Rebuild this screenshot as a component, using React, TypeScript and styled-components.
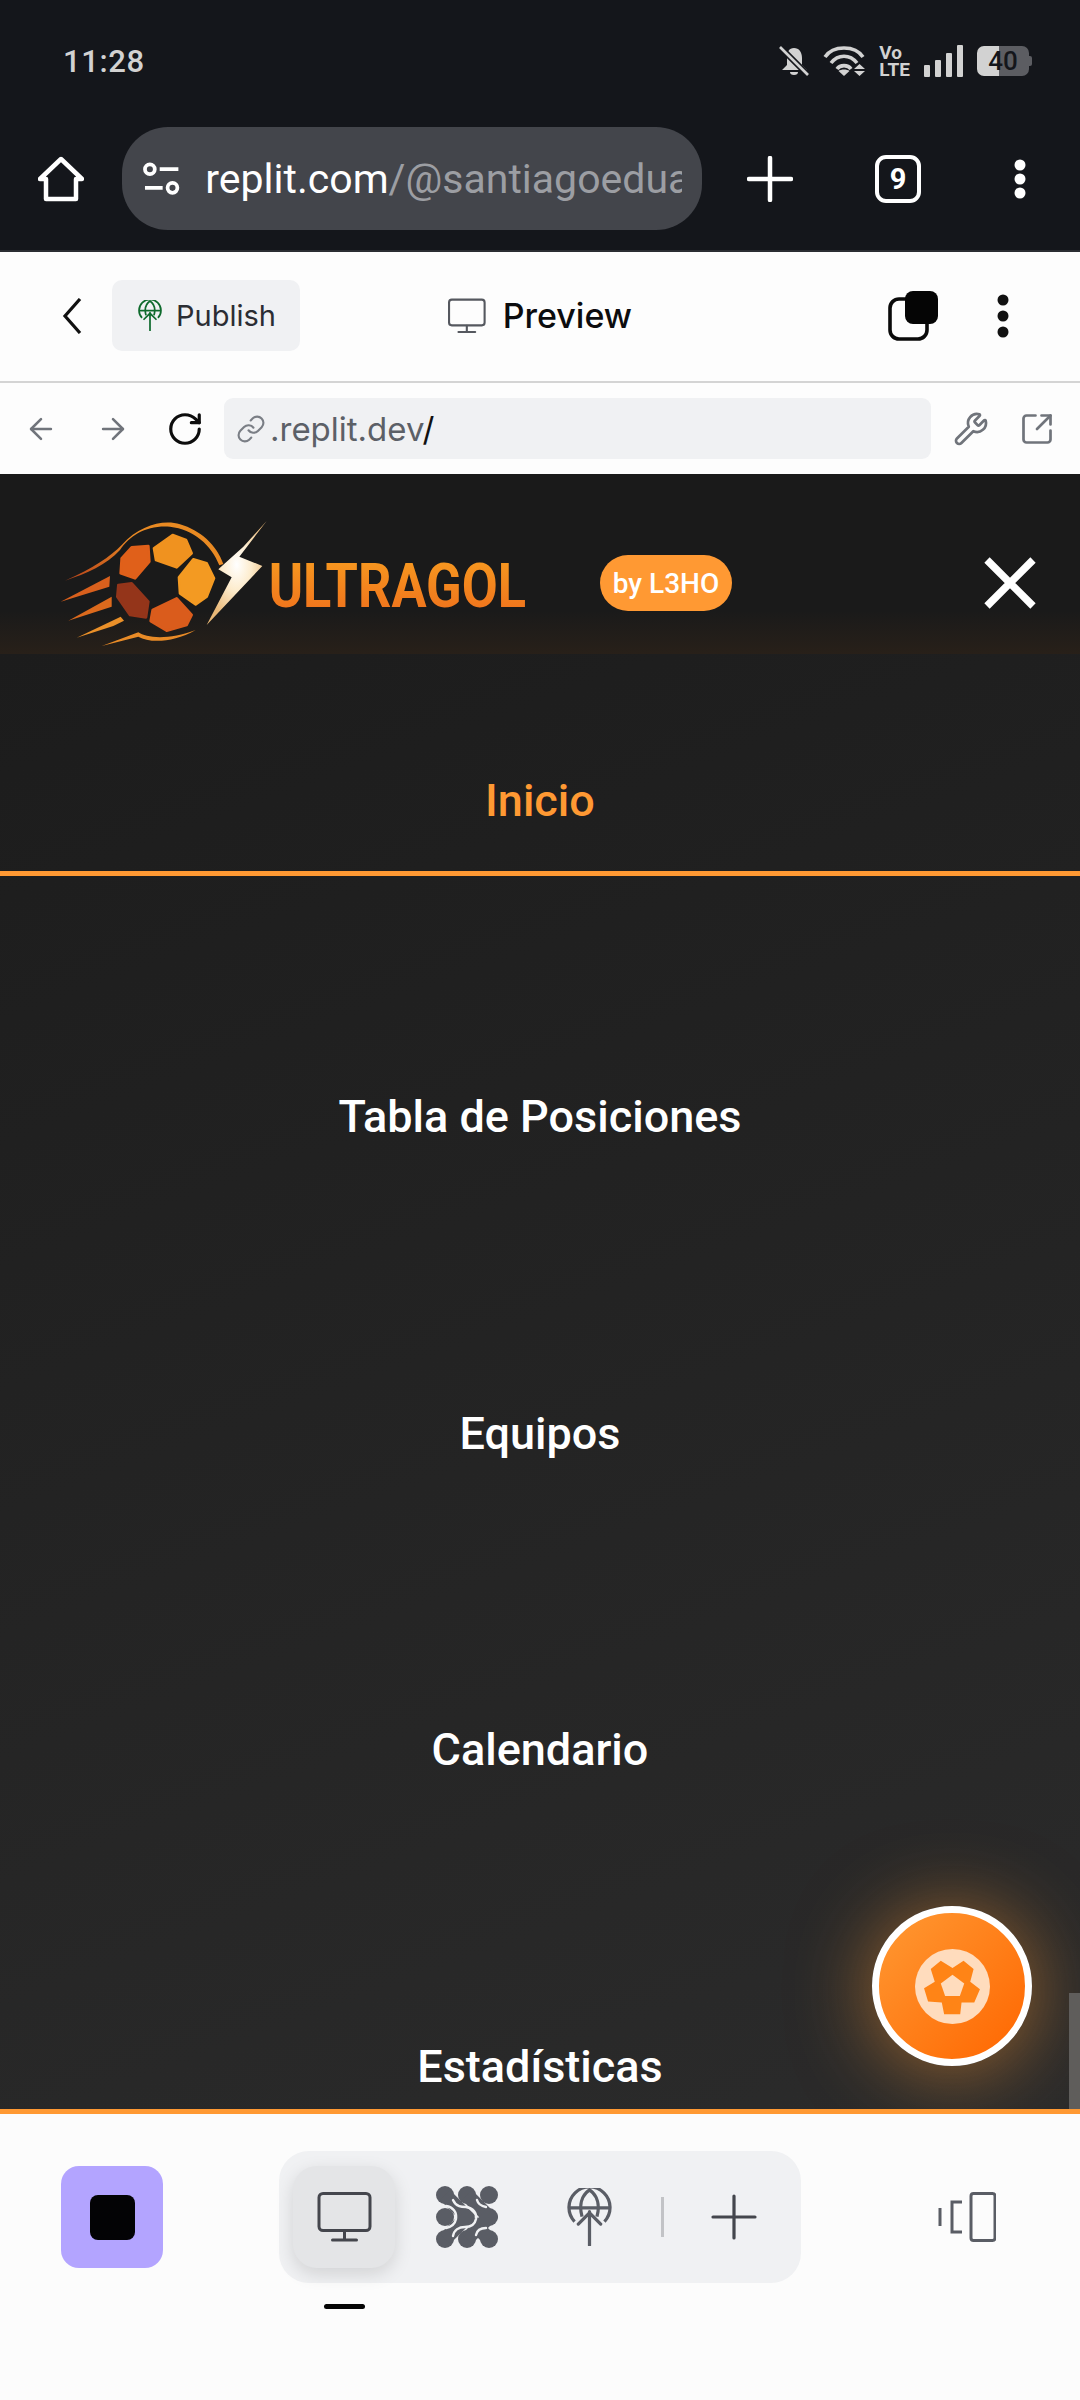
import React from "react";
import styled, { createGlobalStyle } from "styled-components";
import { ArrowLeft, ArrowRight, Link, RotateCw, SquareArrowOutUpRight, Wrench } from "lucide-react";

const GlobalStyle = createGlobalStyle`
  html, body { margin: 0; padding: 0; background: #fcfcfc; }
  * { box-sizing: border-box; }
  body { font-family: Roboto, "Liberation Sans", sans-serif; }
`;

const menuItems = ["Inicio", "Tabla de Posiciones", "Equipos", "Calendario", "Estadísticas"];

const ballPanels = [
  { fill: "#f0921f", d: "M372 175L428 135L468 150L485 190L440 232L378 210Z" },
  { fill: "#f39a22", d: "M490 208L530 220L552 265L530 320L497 343L450 310L447 262Z" },
  { fill: "#e0601a", d: "M305 172L355 168L358 215L315 265L272 250L275 205Z" },
  { fill: "#94351a", d: "M265 285L305 280L355 335L348 382L300 375L262 320Z" },
  { fill: "#da5c1c", d: "M440 325L485 375L470 405L410 422L362 393L368 360Z" }
];

const GlobeUp: React.FC<{ color: string; size: number }> = ({ color, size }) => (
  <svg width={size} height={size * 1.3} viewBox="0 0 36 47" fill="none" stroke={color} strokeWidth="2.6">
    <path d="M6 27A16.5 16.5 0 1 1 30 27" />
    <path d="M1.5 16H34.5" />
    <path d="M12 23C9.5 14 11.5 6 18 1.5C24.5 6 26.5 14 24 23" />
    <path d="M18 19V46M9 29L18 20L27 29" strokeLinecap="round" />
  </svg>
);

const MonitorIcon: React.FC<{ color: string; width: number; height: number; stroke: number }> = ({
  color,
  width,
  height,
  stroke
}) => (
  <svg width={width} height={height} viewBox="0 0 54 50" fill="none" stroke={color} strokeWidth={stroke}>
    <rect x="1.5" y="1.5" width="51" height="37" rx="4" />
    <path d="M27 39V47M15 48H39" strokeLinecap="round" />
  </svg>
);

const PlusIcon: React.FC<{ color: string; size: number; stroke: number }> = ({ color, size, stroke }) => (
  <svg width={size} height={size} viewBox="0 0 46 46" stroke={color} strokeWidth={stroke} strokeLinecap="round">
    <path d="M23 2V44M2 23H44" />
  </svg>
);

const DotsIcon: React.FC<{ color: string; height: number }> = ({ color, height }) => (
  <svg width="12" height={height} viewBox={`0 0 12 ${height}`} fill={color}>
    <circle cx="6" cy="6" r="5.5" />
    <circle cx="6" cy={height / 2} r="5.5" />
    <circle cx="6" cy={height - 6} r="5.5" />
  </svg>
);

const Logo = () => (
  <svg width="520" height="164" viewBox="0 0 1560 492">
    <defs>
      <linearGradient id="swoosh" x1="0" y1="1" x2="1" y2="0">
        <stop offset="0" stopColor="#b8431a" />
        <stop offset="0.6" stopColor="#ea8a24" />
        <stop offset="1" stopColor="#e88a20" />
      </linearGradient>
      <linearGradient id="word" x1="0" y1="0" x2="0" y2="1">
        <stop offset="0" stopColor="#f89f20" />
        <stop offset="1" stopColor="#ee6c1c" />
      </linearGradient>
      <radialGradient id="bolt" cx="0.5" cy="0.42" r="0.55">
        <stop offset="0" stopColor="#ffffff" />
        <stop offset="0.45" stopColor="#fdeccd" />
        <stop offset="1" stopColor="#e9b877" />
      </radialGradient>
    </defs>
    <path fill="url(#swoosh)" d="M105 272C190 235 240 200 275 165C330 105 400 88 450 103C510 120 560 165 580 222L568 226C545 165 490 118 420 110C350 105 300 135 270 180C230 225 170 250 105 272Z" />
    <path fill="#d9601d" d="M92 335L240 258L238 290Z" />
    <path fill="#dc6a1d" d="M115 392L245 320L245 350Z" />
    <path fill="#ea9029" d="M140 443L272 380L282 392L250 408Z" />
    <path fill="#e98b27" d="M215 468L325 427C350 445 420 450 497 420C430 458 360 460 325 440Z" />
    {ballPanels.map(panel => (
      <path key={panel.d} d={panel.d} fill={panel.fill} stroke={panel.fill} strokeWidth="8" strokeLinejoin="round" />
    ))}
    <path fill="url(#bolt)" d="M710 93L628 200L697 228L530 405L605 262L565 238L640 170Z" />
    <text
      x="716"
      y="352"
      fill="url(#word)"
      fontFamily="Roboto, sans-serif"
      fontWeight="700"
      fontSize="186"
      textLength="772"
      lengthAdjust="spacingAndGlyphs"
    >
      ULTRAGOL
    </text>
  </svg>
);

const AgentIcon = () => (
  <svg width="62" height="62" viewBox="0 0 62 62" fill="#5a5d65">
    <circle cx="9" cy="9" r="9" />
    <circle cx="31" cy="9" r="9" />
    <circle cx="53" cy="9" r="9" />
    <circle cx="9" cy="31" r="9" />
    <circle cx="53" cy="31" r="9" />
    <circle cx="9" cy="53" r="9" />
    <circle cx="31" cy="53" r="9" />
    <circle cx="53" cy="53" r="9" />
    <path d="M9 9L31 31L9 53M31 9L53 31L31 53M53 53L31 31" stroke="#5a5d65" strokeWidth="14" fill="none" />
    <path
      d="M17 14C20 21 26 21 30 21C37 22 41 27 40 33C39 38 35 41 29 41C23 41 18 44 17 50"
      stroke="#f0f1f3"
      strokeWidth="2.4"
      fill="none"
      strokeLinecap="round"
    />
    <path d="M10 20C17 21 21 26 20 33C19 38 15 41 10 42" stroke="#f0f1f3" strokeWidth="2.4" fill="none" strokeLinecap="round" />
    <path d="M41 14C42 18 45 20 50 21M40 49C41 44 45 42 50 42" stroke="#f0f1f3" strokeWidth="2.4" fill="none" strokeLinecap="round" />
  </svg>
);

const App = () => (
  <Page>
    <GlobalStyle />
    <BrowserChrome>
      <StatusBar>
        <Clock>11:28</Clock>
        <StatusIcons>
          <svg width="30" height="30" viewBox="0 0 30 30" fill="#d2d2d2">
            <path d="M15 2C20 2 23 6 23 12V19L28 24H3L8 19V11C8 6 10 2 15 2Z" />
            <path d="M11 26H19A4 3 0 0 1 11 26Z" />
            <path d="M1 1L29 29" stroke="#14161b" strokeWidth="6" />
            <path d="M1 1L29 29" stroke="#d2d2d2" strokeWidth="2.6" />
          </svg>
          <svg width="42" height="30" viewBox="0 0 42 30" fill="none" stroke="#d2d2d2" strokeWidth="3.6">
            <path d="M2 11C10 -1 32 -1 40 11" />
            <path d="M8 17C15 8 27 8 34 17" />
            <path d="M14 23C17 18.5 25 18.5 28 23" />
            <path d="M21 30L15.5 25C18 23 24 23 26.5 25Z" fill="#d2d2d2" stroke="none" />
            <path d="M31 23H42L36.5 18ZM31 25H42L36.5 30Z" fill="#d2d2d2" stroke="none" />
          </svg>
          <VoLte>
            <span>Vo</span>
            <span>LTE</span>
          </VoLte>
          <SignalBars>
            {[14, 20, 29, 38].map(h => (
              <SignalBar key={h} $height={h} />
            ))}
          </SignalBars>
          <Battery>
            <BatteryLabel>40</BatteryLabel>
          </Battery>
        </StatusIcons>
      </StatusBar>
      <TabRow>
        <svg width="46" height="46" viewBox="0 0 46 46" fill="none" stroke="#fff" strokeWidth="4.5" strokeLinejoin="round">
          <path d="M23 3L44 23H38V43H8V23H2Z" />
        </svg>
        <AddressPill>
          <svg width="38" height="36" viewBox="0 0 38 36" fill="none" stroke="#fff" strokeWidth="3.8">
            <circle cx="7" cy="8" r="5" />
            <path d="M17 8H36M2 27H20" />
            <circle cx="30" cy="27" r="5" />
          </svg>
          <AddressText>
            replit.com<AddressPath>/@santiagoedua</AddressPath>
          </AddressText>
        </AddressPill>
        <IconSlot $left={45}>
          <PlusIcon color="#fff" size={46} stroke={4.5} />
        </IconSlot>
        <TabCounter>9</TabCounter>
        <IconSlot $left={93}>
          <DotsIcon color="#fff" height={40} />
        </IconSlot>
      </TabRow>
    </BrowserChrome>

    <EditorHeader>
      <svg width="20" height="36" viewBox="0 0 20 36" fill="none" stroke="#111" strokeWidth="3.2">
        <path d="M18 1L3 18L18 35" />
      </svg>
      <PublishButton>
        <GlobeUp color="#0f6b2d" size={24} />
        Publish
      </PublishButton>
      <PreviewTitle>
        <MonitorIcon color="#55585f" width={38} height={36} stroke={3} />
        <PreviewLabel>Preview</PreviewLabel>
      </PreviewTitle>
      <svg width="50" height="50" viewBox="0 0 50 50">
        <rect x="2" y="8" width="37" height="40" rx="9" fill="none" stroke="#0a0a0a" strokeWidth="3.6" />
        <rect x="17" y="0" width="33" height="33" rx="8" fill="#050505" />
      </svg>
      <IconSlot $left={59}>
        <DotsIcon color="#111" height={44} />
      </IconSlot>
    </EditorHeader>

    <PreviewBar>
      <ArrowLeft size={34} color="#70747b" strokeWidth={1.8} />
      <IconSlot $left={38}>
        <ArrowRight size={34} color="#70747b" strokeWidth={1.8} />
      </IconSlot>
      <IconSlot $left={36}>
        <RotateCw size={38} color="#0d0d0d" strokeWidth={2} />
      </IconSlot>
      <UrlField>
        <Link size={30} color="#7a7e85" strokeWidth={1.7} />
        <UrlText>
          .replit.dev<UrlSlash>/</UrlSlash>
        </UrlText>
      </UrlField>
      <IconSlot $left={22}>
        <Wrench size={36} color="#70747b" strokeWidth={1.8} />
      </IconSlot>
      <IconSlot $left={30}>
        <SquareArrowOutUpRight size={36} color="#70747b" strokeWidth={1.8} />
      </IconSlot>
    </PreviewBar>

    <AppViewport>
      <SiteHeader>
        <Logo />
        <ByBadge>by L3HO</ByBadge>
        <CloseButton>
          <svg width="52" height="52" viewBox="0 0 52 52" stroke="#fff" strokeWidth="7.5">
            <path d="M3 3L49 49M49 3L3 49" />
          </svg>
        </CloseButton>
      </SiteHeader>
      <MenuPanel>
        <MenuList>
          {menuItems.map((item, i) => (
            <MenuItem key={item} $active={i === 0}>
              {item}
            </MenuItem>
          ))}
        </MenuList>
        <BallFab>
          <svg width="75" height="75" viewBox="223 205 224 224">
            <circle cx="335" cy="317" r="112" fill="#ffdcbd" />
            <path fill="#ff8416" d="M270 265L300 240L335 262L368 240L398 265L388 303L417 325L400 365L362 365L358 400L310 400L303 365L262 362L250 322L282 303Z" />
            <path fill="#ffdcbd" d="M335 282L370 308L357 345L313 345L300 308Z" />
          </svg>
        </BallFab>
        <ScrollThumb />
      </MenuPanel>
    </AppViewport>

    <BottomBar>
      <StopButton>
        <StopSquare />
      </StopButton>
      <ToolGroup>
        <ActiveTool>
          <MonitorIcon color="#44464d" width={55} height={50} stroke={3} />
          <ActiveDash />
        </ActiveTool>
        <ToolSlot $width={90} $left={27}>
          <AgentIcon />
        </ToolSlot>
        <ToolSlot $width={70} $left={42}>
          <GlobeUp color="#5a5d65" size={45} />
        </ToolSlot>
        <ToolDivider />
        <ToolSlot $width={94} $left={23}>
          <PlusIcon color="#44464d" size={46} stroke={3.2} />
        </ToolSlot>
      </ToolGroup>
      <PanelToggle>
        <svg width="58" height="50" viewBox="0 0 58 50" fill="none" stroke="#5a5d65" strokeWidth="3">
          <path d="M2 16V34" />
          <path d="M24 10H14V40H24" />
          <rect x="33" y="1.5" width="24" height="47" rx="2.5" />
        </svg>
      </PanelToggle>
    </BottomBar>
  </Page>
);

const Page = styled.div`
  width: 1080px;
  height: 2400px;
  display: flex;
  flex-direction: column;
  overflow: hidden;
  background: #fcfcfc;
`;

const BrowserChrome = styled.div`
  height: 252px;
  background: #14161b;
  border-bottom: 2px solid #2b2d32;
`;

const StatusBar = styled.div`
  height: 122px;
  display: flex;
  align-items: center;
  justify-content: space-between;
  padding: 0 48px 0 63px;
`;

const Clock = styled.div`
  font-size: 31px;
  font-weight: 500;
  letter-spacing: 0.6px;
  color: #d2d2d2;
`;

const StatusIcons = styled.div`
  display: flex;
  align-items: center;
  gap: 14px;
`;

const VoLte = styled.div`
  display: flex;
  flex-direction: column;
  font-size: 19px;
  line-height: 17px;
  font-weight: 700;
  color: #d2d2d2;
`;

const SignalBars = styled.div`
  display: flex;
  align-items: flex-end;
  gap: 5px;
  height: 32px;
`;

const SignalBar = styled.div<{ $height: number }>`
  width: 6px;
  height: ${p => (p.$height * 32) / 38}px;
  border-radius: 1px;
  background: #d2d2d2;
`;

const Battery = styled.div`
  position: relative;
  width: 52px;
  height: 30px;
  margin-right: 3px;
  display: flex;
  align-items: center;
  justify-content: center;
  border-radius: 7px;
  background: linear-gradient(90deg, #d2d2d2 0 42%, #5c5d62 42% 100%);

  &::after {
    content: "";
    position: absolute;
    right: -3px;
    top: 10px;
    width: 3px;
    height: 10px;
    border-radius: 0 2px 2px 0;
    background: #5c5d62;
  }
`;

const BatteryLabel = styled.span`
  font-size: 26px;
  font-weight: 500;
  color: #14161b;
`;

const TabRow = styled.div`
  display: flex;
  align-items: center;
  height: 103px;
  margin-top: 5px;
  padding-left: 38px;
`;

const AddressPill = styled.div`
  width: 580px;
  height: 103px;
  margin-left: 38px;
  padding: 0 20px 0 21px;
  display: flex;
  align-items: center;
  gap: 25px;
  border-radius: 46px;
  background: #43454b;
  overflow: hidden;
`;

const AddressText = styled.div`
  font-size: 41px;
  color: #fff;
  white-space: nowrap;
  overflow: hidden;
`;

const AddressPath = styled.span`
  color: #9c9ea3;
`;

const IconSlot = styled.div<{ $left: number }>`
  display: flex;
  margin-left: ${p => p.$left}px;
`;

const TabCounter = styled.div`
  width: 46px;
  height: 48px;
  margin-left: 82px;
  display: flex;
  align-items: center;
  justify-content: center;
  border: 4px solid #fff;
  border-radius: 11px;
  font-size: 29px;
  font-weight: 700;
  color: #fff;
`;

const EditorHeader = styled.div`
  height: 131px;
  display: flex;
  align-items: center;
  padding: 0 0 2px 62px;
  background: #fdfdfd;
  border-bottom: 2px solid #d4d4d4;
`;

const PublishButton = styled.div`
  width: 188px;
  height: 71px;
  margin-left: 30px;
  padding-left: 26px;
  display: flex;
  align-items: center;
  gap: 14px;
  border-radius: 10px;
  background: #f0f1f3;
  font-family: Inter, sans-serif;
  font-size: 29px;
  color: #2b2d33;
`;

const PreviewTitle = styled.div`
  width: 184px;
  margin: 0 256px 0 148px;
  display: flex;
  align-items: center;
  gap: 17px;
`;

const PreviewLabel = styled.span`
  font-family: Inter, sans-serif;
  font-size: 34px;
  font-weight: 500;
  line-height: 36px;
  color: #0c0c0e;
`;

const PreviewBar = styled.div`
  height: 91px;
  display: flex;
  align-items: center;
  padding-left: 24px;
  background: #fdfdfd;
`;

const UrlField = styled.div`
  width: 707px;
  height: 61px;
  margin-left: 20px;
  padding-left: 12px;
  display: flex;
  align-items: center;
  gap: 4px;
  border-radius: 9px;
  background: #f0f1f3;
`;

const UrlText = styled.div`
  font-family: Inter, sans-serif;
  font-size: 33px;
  color: #5c6067;
`;

const UrlSlash = styled.span`
  color: #111;
`;

const AppViewport = styled.div`
  height: 1640px;
  flex-shrink: 0;
  display: flex;
  flex-direction: column;
  background: #1c1c1c;
  border-bottom: 5px solid #ff9933;
`;

const SiteHeader = styled.div`
  height: 180px;
  flex-shrink: 0;
  display: flex;
  align-items: flex-start;
  padding: 16px 0 0 30px;
  background: linear-gradient(180deg, #1a1a1a 0, #1a1a1a 76%, #282019 100%);
`;

const ByBadge = styled.div`
  width: 132px;
  height: 56px;
  margin: 65px 0 0 50px;
  display: flex;
  align-items: center;
  justify-content: center;
  border-radius: 28px;
  background: #ff9933;
  font-size: 28px;
  font-weight: 500;
  color: #fff;
`;

const CloseButton = styled.div`
  display: flex;
  margin: 67px 0 0 252px;
`;

const MenuPanel = styled.div`
  position: relative;
  flex: 1;
  overflow: hidden;
  background: linear-gradient(160deg, #1c1c1c 0%, #2b2b2b 100%);
`;

const MenuList = styled.div`
  display: flex;
  flex-direction: column;
  gap: 165.6px;
  padding-top: 71px;
`;

const MenuItem = styled.div<{ $active: boolean }>`
  height: 151px;
  flex-shrink: 0;
  padding-top: 4px;
  display: flex;
  align-items: center;
  justify-content: center;
  font-size: 45px;
  font-weight: 500;
  color: ${p => (p.$active ? "#ff9933" : "#fff")};
  border-bottom: 5px solid ${p => (p.$active ? "#ff9933" : "transparent")};
`;

const BallFab = styled.div`
  position: absolute;
  right: 48px;
  bottom: 43px;
  width: 160px;
  height: 160px;
  display: flex;
  align-items: center;
  justify-content: center;
  border: 7px solid #fff;
  border-radius: 50%;
  background: linear-gradient(135deg, #ff9933 0%, #ff6600 100%);
  box-shadow: 0 4px 80px rgba(255, 153, 51, 0.55);
`;

const ScrollThumb = styled.div`
  position: absolute;
  right: 0;
  bottom: 0;
  width: 11px;
  height: 116px;
  background: #5f5d5b;
`;

const BottomBar = styled.div`
  flex: 1;
  display: flex;
  align-items: flex-start;
  padding: 37px 0 0 61px;
  background: #fcfcfc;
`;

const StopButton = styled.div`
  width: 102px;
  height: 102px;
  margin-top: 15px;
  display: flex;
  align-items: center;
  justify-content: center;
  border-radius: 18px;
  background: #b3a4ff;
`;

const StopSquare = styled.div`
  width: 45px;
  height: 45px;
  border-radius: 8px;
  background: #030305;
`;

const ToolGroup = styled.div`
  width: 522px;
  height: 132px;
  margin-left: 116px;
  padding: 15px 14px;
  display: flex;
  align-items: center;
  border-radius: 30px;
  background: #f0f1f3;
`;

const ActiveTool = styled.div`
  position: relative;
  width: 102px;
  height: 102px;
  flex-shrink: 0;
  display: flex;
  align-items: center;
  justify-content: center;
  border-radius: 24px;
  background: #e4e5e7;
  box-shadow: 0 6px 18px rgba(0, 0, 0, 0.13);
`;

const ActiveDash = styled.div`
  position: absolute;
  left: 31px;
  top: 138px;
  width: 41px;
  height: 5px;
  border-radius: 3px;
  background: #050505;
`;

const ToolSlot = styled.div<{ $width: number; $left: number }>`
  width: ${p => p.$width}px;
  flex-shrink: 0;
  display: flex;
  justify-content: center;
  margin-left: ${p => p.$left}px;
`;

const ToolDivider = styled.div`
  width: 3px;
  height: 40px;
  margin-left: 37px;
  flex-shrink: 0;
  background: #c2c3c6;
`;

const PanelToggle = styled.div`
  display: flex;
  margin: 41px 0 0 137px;
`;

export default App;
